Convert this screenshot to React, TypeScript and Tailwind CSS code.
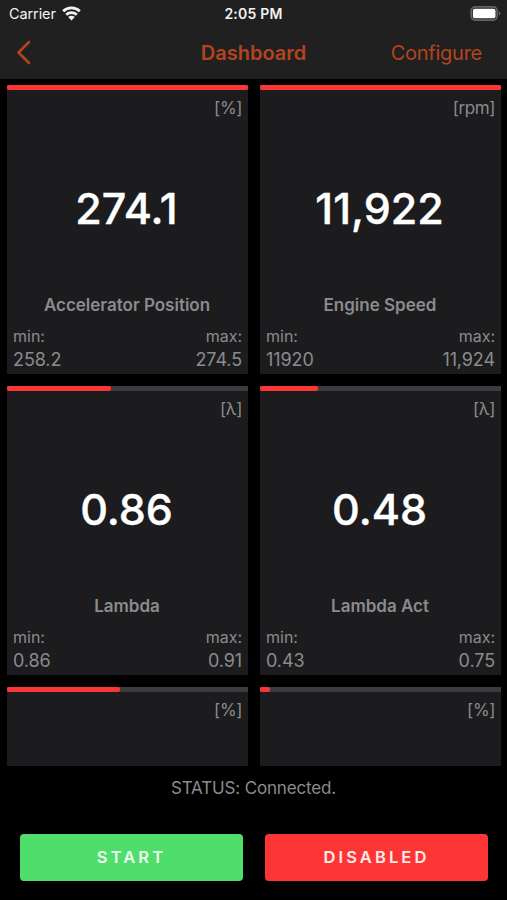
import React from 'react';

interface Gauge {
  name: string;
  unit: string;
  value: string;
  min: string;
  max: string;
  level: number;
}

const gauges: Gauge[] = [
  { name: 'Accelerator Position', unit: '[%]', value: '274.1', min: '258.2', max: '274.5', level: 100 },
  { name: 'Engine Speed', unit: '[rpm]', value: '11,922', min: '11920', max: '11,924', level: 100 },
  { name: 'Lambda', unit: '[λ]', value: '0.86', min: '0.86', max: '0.91', level: 43.2 },
  { name: 'Lambda Act', unit: '[λ]', value: '0.48', min: '0.43', max: '0.75', level: 24 },
  { name: '', unit: '[%]', value: '', min: '', max: '', level: 46.8 },
  { name: '', unit: '[%]', value: '', min: '', max: '', level: 4.2 },
];

const StatusBar: React.FC = () => (
  <div className="h-[27px] pl-[9px] pr-[6px] grid grid-cols-[1fr_auto_1fr] items-center text-[#f2f2f2]">
    <div className="flex items-center gap-[6px]">
      <span className="w-[47px] text-[14.5px] leading-[27px] tracking-[-0.1px]">Carrier</span>
      <svg className="w-[19px] h-[15px]" viewBox="0 0 19 15" fill="none" stroke="currentColor">
        <path d="M1.2 5.3C5.8.8 13.2.8 17.8 5.3" strokeWidth="2.8" />
        <path d="M4.2 8.7c2.9-2.8 7.7-2.8 10.6 0" strokeWidth="2.6" />
        <path d="M9.5 14.4 6.2 11.1c1.8-1.7 4.8-1.7 6.6 0z" fill="currentColor" stroke="none" />
      </svg>
    </div>
    <span className="-ml-[3px] text-[14px] leading-[27px] font-semibold tracking-[0.2px]">2:05 PM</span>
    <svg className="w-[31px] h-[15px] justify-self-end" viewBox="0 0 31 15">
      <rect x="1.2" y="0.9" width="26" height="13.2" rx="4" fill="#202020" stroke="#636363" strokeWidth="1.7" />
      <rect x="2.9" y="2.7" width="22.6" height="9.6" rx="2" fill="#fff" />
      <path d="M28.9 5.3c1.9.8 1.9 3.6 0 4.4z" fill="#6b6b6b" />
    </svg>
  </div>
);

const NavBar: React.FC = () => (
  <div className="h-[52px] px-[15px] grid grid-cols-[1fr_auto_1fr] items-center text-[#b3441e]">
    <button className="justify-self-start">
      <svg className="w-[18px] h-[26px]" viewBox="0 0 18 26" fill="none" stroke="currentColor" strokeWidth="2.6" strokeLinecap="round" strokeLinejoin="round">
        <path d="M14 2 3.5 12.5 14 23" />
      </svg>
    </button>
    <h1 className="text-[20px] leading-[50px] font-semibold">Dashboard</h1>
    <button className="justify-self-end pr-[10px] text-[20px] leading-[50px] tracking-[-0.25px]">Configure</button>
  </div>
);

const GaugeCard: React.FC<{ gauge: Gauge }> = ({ gauge }) => (
  <div className="h-[289px] bg-[#1c1c1e] text-[#8b8b8d] flex flex-col">
    <div className="h-[5px] shrink-0 bg-[#3c3c3e]">
      <div className="h-full rounded-[2px] bg-[#fc3537]" style={{ width: `${gauge.level}%` }} />
    </div>
    <div className="h-[36px] px-[6px] text-right text-[17px] leading-[36px] tracking-[-0.4px]">{gauge.unit}</div>
    {gauge.value && (
      <>
        <div className="h-[166px] pr-[2px] text-center text-[43px] leading-[164px] font-medium text-white [-webkit-text-stroke:0.4px_white]">{gauge.value}</div>
        <div className="h-[32px] pr-px text-center text-[17px] leading-[26px] font-semibold">{gauge.name}</div>
        <div className="flex justify-between px-[6px] text-[16px] leading-[24px]">
          <span>min:</span>
          <span>max:</span>
        </div>
        <div className="flex justify-between px-[6px] text-[18px] leading-[24px] tracking-[-0.1px]">
          <span>{gauge.min}</span>
          <span>{gauge.max}</span>
        </div>
      </>
    )}
  </div>
);

export default function App() {
  return (
    <div className="w-[507px] h-[900px] bg-black flex flex-col overflow-hidden font-['Inter',sans-serif]">
      <header className="h-[79px] shrink-0 bg-[#202020]">
        <StatusBar />
        <NavBar />
      </header>

      <main className="h-[687px] shrink-0 overflow-hidden pt-[6px] px-[7px]">
        <div className="grid grid-cols-[241px_241px] gap-3">
          {gauges.map((gauge, i) => (
            <GaugeCard key={i} gauge={gauge} />
          ))}
        </div>
      </main>

      <footer>
        <p className="h-[68px] text-center text-[17px] leading-[45px] tracking-[-0.15px] text-[#8b8b8d]">STATUS: Connected.</p>
        <div className="flex gap-[22px] pl-[20px] text-[16.5px] font-semibold tracking-[3.1px] text-white/90">
          <button className="w-[223px] h-[47px] rounded bg-[#4fde6b]">START</button>
          <button className="w-[223px] h-[47px] rounded bg-[#fe3535]">DISABLED</button>
        </div>
      </footer>
    </div>
  );
}
